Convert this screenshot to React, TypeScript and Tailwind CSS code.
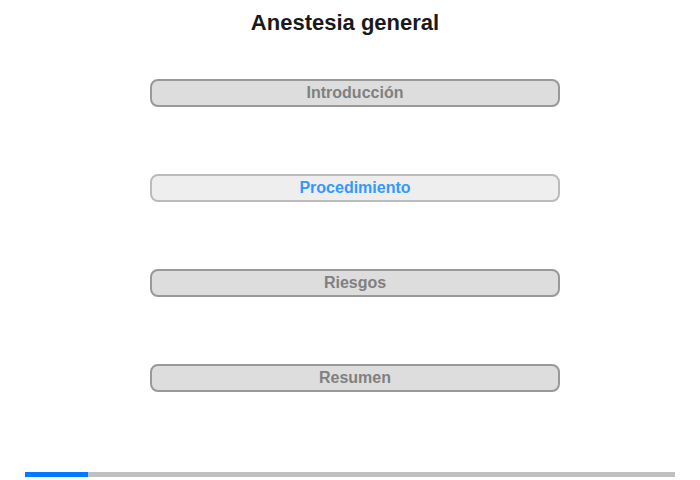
export default function App() {
  const items = [
    { label: "Introducción", active: false },
    { label: "Procedimiento", active: true },
    { label: "Riesgos", active: false },
    { label: "Resumen", active: false },
  ];
  return (
    <div className="w-[700px] h-[480px] bg-white flex flex-col" style={{ fontFamily: '"Liberation Sans", Arial, sans-serif' }}>
      <h1 className="mt-[10px] h-[26px] leading-[26px] text-[22px] font-bold text-[#1a1a1a] text-center pr-[10px]">Anestesia general</h1>
      <div className="mt-[43px] ml-[150px] flex flex-col gap-[67px] w-[410px]">
        {items.map((it) => (
          <div
            key={it.label}
            className={
              it.active
                ? "h-[28px] rounded-[8px] border-2 border-[#bbbbbb] bg-[#eeeeee] text-[#3399ff] flex items-center justify-center text-[16px] font-bold"
                : "h-[28px] rounded-[8px] border-2 border-[#999999] bg-[#dddddd] text-[#808080] flex items-center justify-center text-[16px] font-bold"
            }
          >
            {it.label}
          </div>
        ))}
      </div>
      <div className="mt-auto mb-[3px] ml-[25px] w-[650px] h-[5px] bg-[#c0c0c0] flex">
        <div className="w-[63px] h-full bg-[#007bff]" />
      </div>
    </div>
  );
}
